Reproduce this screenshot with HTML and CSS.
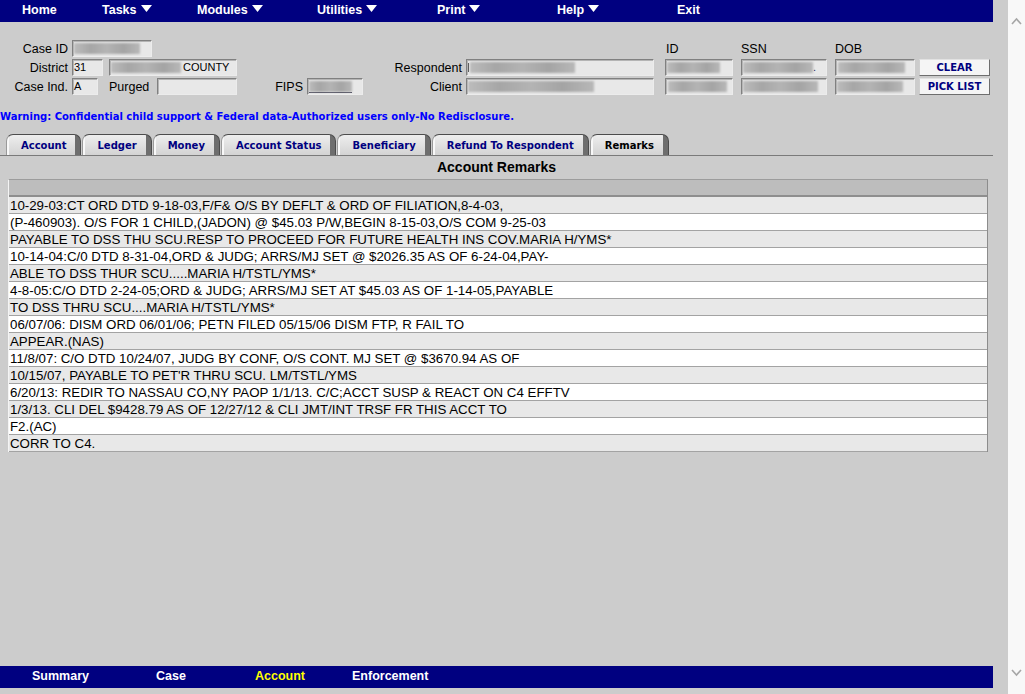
FILE: index.html
```html
<!DOCTYPE html>
<html>
<head>
<meta charset="utf-8">
<title>Account Remarks</title>
<link rel="stylesheet" href="styles.css">
</head>
<body>
<div class="page">
  <div class="main">
    <nav class="topnav">
      <span class="nav-item n-home">Home</span>
      <span class="nav-item n-tasks">Tasks<svg class="tri" viewBox="0 0 11 7"><polygon points="0,0 11,0 5.5,7" fill="#fff"/></svg></span>
      <span class="nav-item n-wide">Modules<svg class="tri" viewBox="0 0 11 7"><polygon points="0,0 11,0 5.5,7" fill="#fff"/></svg></span>
      <span class="nav-item n-wide">Utilities<svg class="tri" viewBox="0 0 11 7"><polygon points="0,0 11,0 5.5,7" fill="#fff"/></svg></span>
      <span class="nav-item n-wide">Print<svg class="tri" viewBox="0 0 11 7"><polygon points="0,0 11,0 5.5,7" fill="#fff"/></svg></span>
      <span class="nav-item n-wide">Help<svg class="tri" viewBox="0 0 11 7"><polygon points="0,0 11,0 5.5,7" fill="#fff"/></svg></span>
      <span class="nav-item">Exit</span>
    </nav>

    <div class="form">
      <div class="frow">
        <span class="lbl r w68">Case ID</span>
        <span class="inp ml4 w80"><span class="blur bw66"></span></span>
        <span class="lbl ml514 w75">ID</span>
        <span class="lbl w94">SSN</span>
        <span class="lbl">DOB</span>
      </div>
      <div class="frow">
        <span class="lbl r w68">District</span>
        <span class="inp ml4 w31">31</span>
        <span class="inp ml6 w128"><span class="blur bw70 mr2"></span>COUNTY</span>
        <span class="lbl r w225">Respondent</span>
        <span class="inp ml4 w188"><span class="tick"></span><span class="blur bw105"></span></span>
        <span class="inp ml11 w68"><span class="blur bw53"></span></span>
        <span class="inp ml8 w86"><span class="blur bw70"></span><span class="dot">.</span></span>
        <span class="inp ml8 w80"><span class="blur bw67 ml1"></span></span>
        <span class="btn ml4 w71">CLEAR</span>
      </div>
      <div class="frow">
        <span class="lbl r w68">Case Ind.</span>
        <span class="inp ml4 w26">A</span>
        <span class="lbl ml11 w48">Purged</span>
        <span class="inp w80"></span>
        <span class="lbl r w66">FIPS</span>
        <span class="inp ml4 w56"><span class="uline"><span class="blur bw43"></span></span></span>
        <span class="lbl r w99">Client</span>
        <span class="inp ml4 w188"><span class="blur bw126"></span></span>
        <span class="inp ml11 w68"><span class="blur bw59 ml1"></span></span>
        <span class="inp ml8 w86"><span class="blur bw75"></span></span>
        <span class="inp ml8 w80"><span class="blur bw66"></span></span>
        <span class="btn ml4 w71">PICK LIST</span>
      </div>
    </div>

    <div class="warning">Warning: Confidential child support &amp; Federal data-Authorized users only-No Redisclosure.</div>

    <div class="tabs">
      <span class="tab">Account</span>
      <span class="tab">Ledger</span>
      <span class="tab">Money</span>
      <span class="tab">Account Status</span>
      <span class="tab">Beneficiary</span>
      <span class="tab">Refund To Respondent</span>
      <span class="tab active">Remarks</span>
    </div>

    <div class="title">Account Remarks</div>

    <div class="remarks">
      <div class="rhead"></div>
      <div class="rrow">10-29-03:CT ORD DTD 9-18-03,F/F&amp; O/S BY DEFLT &amp; ORD OF FILIATION,8-4-03,</div>
      <div class="rrow alt">(P-460903). O/S FOR 1 CHILD,(JADON) @ $45.03 P/W,BEGIN 8-15-03,O/S COM 9-25-03</div>
      <div class="rrow">PAYABLE TO DSS THU SCU.RESP TO PROCEED FOR FUTURE HEALTH INS COV.MARIA H/YMS*</div>
      <div class="rrow alt">10-14-04:C/0 DTD 8-31-04,ORD &amp; JUDG; ARRS/MJ SET @ $2026.35 AS OF 6-24-04,PAY-</div>
      <div class="rrow">ABLE TO DSS THUR SCU.....MARIA H/TSTL/YMS*</div>
      <div class="rrow alt">4-8-05:C/O DTD 2-24-05;ORD &amp; JUDG; ARRS/MJ SET AT $45.03 AS OF 1-14-05,PAYABLE</div>
      <div class="rrow">TO DSS THRU SCU....MARIA H/TSTL/YMS*</div>
      <div class="rrow alt">06/07/06: DISM ORD 06/01/06; PETN FILED 05/15/06 DISM FTP, R FAIL TO</div>
      <div class="rrow">APPEAR.(NAS)</div>
      <div class="rrow alt">11/8/07: C/O DTD 10/24/07, JUDG BY CONF, O/S CONT. MJ SET @ $3670.94 AS OF</div>
      <div class="rrow">10/15/07, PAYABLE TO PET'R THRU SCU. LM/TSTL/YMS</div>
      <div class="rrow alt">6/20/13: REDIR TO NASSAU CO,NY PAOP 1/1/13. C/C;ACCT SUSP &amp; REACT ON C4 EFFTV</div>
      <div class="rrow">1/3/13. CLI DEL $9428.79 AS OF 12/27/12 &amp; CLI JMT/INT TRSF FR THIS ACCT TO</div>
      <div class="rrow alt">F2.(AC)</div>
      <div class="rrow">CORR TO C4.</div>
    </div>

    <nav class="botnav">
      <span class="nav-item b-summary">Summary</span>
      <span class="nav-item b-case">Case</span>
      <span class="nav-item b-account current">Account</span>
      <span class="nav-item">Enforcement</span>
    </nav>
  </div>

  <div class="scrollbar">
    <svg class="chev" viewBox="0 0 11 8"><polyline points="1,7 5.5,2 10,7" fill="none" stroke="#a6a6a6" stroke-width="1.6"/></svg>
    <svg class="chev" viewBox="0 0 11 8"><polyline points="1,1 5.5,6 10,1" fill="none" stroke="#a6a6a6" stroke-width="1.6"/></svg>
  </div>
</div>
</body>
</html>
```

FILE: styles.css
```css
* { box-sizing: border-box; }
html, body { margin: 0; padding: 0; }
body {
  background: #cccccc;
  font-family: "Liberation Sans", Arial, sans-serif;
  color: #000;
  overflow: hidden;
}
.page { display: flex; height: 100vh; }
.main { flex: 1; min-width: 0; display: flex; flex-direction: column; }

/* scrollbar */
.scrollbar {
  width: 17px;
  background: #f8f8f8;
  display: flex;
  flex-direction: column;
  justify-content: space-between;
  align-items: center;
  padding: 17px 0 17px;
}
.chev { width: 11px; height: 8px; display: block; }

/* nav bars */
.topnav, .botnav {
  width: 993px;
  height: 22px;
  flex: none;
  background: #000080;
  display: flex;
  color: #fff;
  font-weight: bold;
  font-size: 12.5px;
  line-height: 20px;
}
.topnav { padding-left: 22px; }
.botnav { padding-left: 32px; margin-top: auto; margin-bottom: 6px; }
.nav-item { display: flex; align-items: flex-start; white-space: nowrap; }
.n-home { width: 80px; }
.n-tasks { width: 95px; }
.n-wide { width: 120px; }
.b-summary { width: 124px; }
.b-case { width: 99px; }
.b-account { width: 97px; }
.current { color: #ffff00; }
.tri { width: 11px; height: 7px; margin: 5px 0 0 4px; }

/* form */
.form { margin-top: 18px; display: flex; flex-direction: column; gap: 2px; font-size: 12.5px; }
.frow { display: flex; height: 17px; }
.lbl { line-height: 18px; white-space: nowrap; flex: none; }
.r { text-align: right; }
.inp {
  flex: none;
  display: flex;
  align-items: center;
  background: #e8e8e8;
  border: 1px solid;
  border-color: #808080 #ececec #ececec #808080;
  box-shadow: inset 1px 1px 0 #b4b4b4;
  font-size: 11px;
  line-height: 15px;
  padding-left: 1px;
  white-space: nowrap;
  overflow: hidden;
}
.btn {
  flex: none;
  display: flex;
  align-items: center;
  justify-content: center;
  background: #f5f5f5;
  border: 1px solid;
  border-color: #e2e2e2 #6e6e6e #6e6e6e #cfcfcf;
  font-family: "DejaVu Sans", Verdana, sans-serif;
  font-weight: bold;
  font-size: 10px;
  color: #000080;
}
.blur {
  display: inline-block;
  height: 11px;
  flex: none;
  background: linear-gradient(90deg, #bcbcbc, #a6a6a6 25%, #b4b4b4 50%, #a4a4a4 75%, #b8b8b8);
  filter: blur(0.8px);
}
.tick { display: inline-block; width: 1px; height: 9px; margin-right: 1px; background: #555; flex: none; }
.dot { color: #1a1a60; }
.uline { display: inline-flex; border-bottom: 1px solid #3c3c50; height: 13px; align-items: center; }

.w26 { width: 26px; } .w31 { width: 31px; } .w48 { width: 48px; } .w56 { width: 56px; }
.w66 { width: 66px; } .w68 { width: 68px; } .w71 { width: 71px; } .w75 { width: 75px; }
.w80 { width: 80px; } .w86 { width: 86px; } .w94 { width: 94px; } .w99 { width: 99px; }
.w128 { width: 128px; } .w188 { width: 188px; } .w225 { width: 225px; }
.ml1 { margin-left: 1px; } .ml4 { margin-left: 4px; } .ml6 { margin-left: 6px; }
.ml8 { margin-left: 8px; } .ml11 { margin-left: 11px; } .ml514 { margin-left: 514px; }
.mr2 { margin-right: 2px; }
.bw43 { width: 43px; } .bw53 { width: 53px; } .bw59 { width: 59px; } .bw66 { width: 66px; }
.bw67 { width: 67px; } .bw70 { width: 70px; } .bw75 { width: 75px; } .bw105 { width: 105px; }
.bw126 { width: 126px; }

/* warning */
.warning {
  margin-top: 15px;
  font-family: "DejaVu Sans", Verdana, sans-serif;
  font-weight: bold;
  font-size: 10px;
  line-height: 13px;
  color: #0000ff;
  white-space: nowrap;
}

/* tabs */
.tabs {
  margin-top: 11px;
  width: 993px;
  height: 22px;
  flex: none;
  border-bottom: 1px solid #7a7a7a;
  display: flex;
  align-items: flex-end;
  gap: 1px;
  padding-left: 6px;
}
.tab {
  height: 21px;
  padding: 1px 14px 0 14px;
  font-family: "DejaVu Sans", Verdana, sans-serif;
  font-weight: bold;
  font-size: 10px;
  line-height: 19px;
  color: #000080;
  white-space: nowrap;
  border: 1px solid;
  border-color: #4c4c4c #4c4c4c transparent #9a9a9a;
  border-bottom: none;
  border-radius: 7px 7px 0 0;
  background:
    linear-gradient(90deg, #f8f8f8 0, #f8f8f8 2px, transparent 2px, transparent calc(100% - 5px), #6e6e6e calc(100% - 5px)),
    linear-gradient(#eeeeee, #d3d3d3);
}
.tab.active { color: #000; }

/* title */
.title {
  width: 993px;
  height: 23px;
  flex: none;
  line-height: 23px;
  text-align: center;
  font-weight: bold;
  font-size: 14px;
}

/* remarks table */
.remarks {
  margin-left: 8px;
  width: 980px;
  flex: none;
  border-top: 1px solid #9c9c9c;
  border-left: 1px solid #f4f4f4;
  border-right: 1px solid #8c8c8c;
}
.rhead { height: 17px; background: #bdbdbd; border-bottom: 2px solid #8e8e8e; }
.rrow {
  height: 17px;
  border-bottom: 1px solid #a3a3a3;
  background: #e8e8e8;
  font-size: 13.3px;
  line-height: 14px;
  padding: 2px 0 0 1px;
  white-space: nowrap;
  overflow: hidden;
}
.rrow.alt { background: #ffffff; }
```
